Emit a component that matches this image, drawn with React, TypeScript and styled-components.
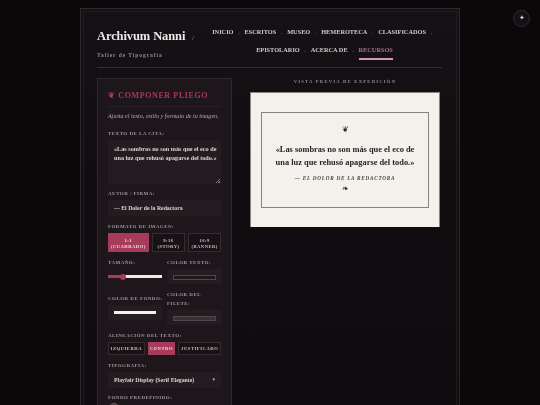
import React from "react";
import styled, { createGlobalStyle } from "styled-components";

const Global = createGlobalStyle`
  html, body { margin: 0; padding: 0; height: 405px; overflow: hidden; background: #0a0708; }
  * { box-sizing: border-box; }
  #root { font-family: "Liberation Serif", serif; }
`;
const Page = styled.div`
  width: 540px; height: 405px; overflow: hidden; padding-top: 8px; filter: blur(0.3px);
  background: #0b0809;
`;
const Frame = styled.div`
  position: relative; width: 380px; margin-left: 80px; height: 420px;
  background: linear-gradient(180deg, #151116 0%, #100c0f 45%, #0f0b0e 100%); border: 1px solid #30262b; padding: 0 17px 0 16px;
  &::before { content: ""; position: absolute; inset: 2px; border: 1px solid #221a1e; pointer-events: none; }
`;
const Header = styled.header`
  display: flex; align-items: flex-start; height: 59px; border-bottom: 1px solid #3a2a30; 
`;
const Brand = styled.div` width: 110px; padding-top: 19px; flex: none; `;
const Title = styled.div`
  font-size: 12.5px; font-weight: 700; color: #efe8e6; line-height: 16px; white-space: nowrap; letter-spacing: -0.1px;
  span { font-size: 7px; color: #a09498; font-weight: 400; margin-left: 7px; }
`;
const Sub = styled.div` font-size: 5.6px; letter-spacing: 0.9px; color: #93868a; margin-top: 6px; font-weight: 700; `;
const Nav = styled.nav`
  flex: 1; display: flex; flex-wrap: wrap; justify-content: center; padding-top: 16px; 
`;
const NavItem = styled.span<{ $active?: boolean }>`
  font-size: 6.3px; letter-spacing: 0; font-weight: 700; white-space: nowrap; height: 17.5px; line-height: 14px;
  color: ${p => (p.$active ? "#b0708a" : "#d3c9c8")};
  & > b { font-weight: 700; border-bottom: ${p => (p.$active ? "2px solid #d79ab5" : "none")}; display: inline-block; height: 17px; }
`;
const Dot = styled.i` color: #a8385a; font-style: normal; font-size: 7px; margin: 0 4.6px; font-weight: 700; `;
const Main = styled.div` display: flex; padding-top: 10px; gap: 18px; `;
const Panel = styled.section`
  width: 135px; flex: none; height: 340px; background: #1d161b; border: 1px solid #33272c; padding: 11px 10px;
`;
const PanelTitle = styled.h2`
  margin: 0; font-size: 8px; letter-spacing: 0.62px; font-weight: 700; color: #a83a5c; line-height: 12px;
  padding-bottom: 4px; border-bottom: 1px solid #2a2026;
`;
const Hint = styled.p` margin: 5px 0 0; font-size: 6.1px; font-style: italic; color: #b5a9ab; line-height: 8px; white-space: nowrap; `;
const Label = styled.div<{ $wrap?: boolean }>`
  font-size: 5px; letter-spacing: 0.46px; font-weight: 700; color: #a0959a; line-height: ${p => (p.$wrap ? "8.5px" : "7px")}; white-space: ${p => (p.$wrap ? "normal" : "nowrap")};
`;
const Field = styled.div<{ $top?: number; $gap?: number }>`
  margin-top: ${p => p.$top ?? 0}px;
  & > ${Label} { margin-bottom: ${p => p.$gap ?? 3}px; }
`;
const TextArea = styled.div`
  position: relative; height: 44px; background: #241c20; padding: 4px 6px; font-size: 6.2px; line-height: 9.3px; font-weight: 700; color: #dcd3d1; white-space: nowrap;
  &::after { content: ""; position: absolute; right: 1px; bottom: 1px; width: 4px; height: 4px; background: linear-gradient(135deg, transparent 50%, #777 50%, #777 60%, transparent 60%, transparent 75%, #777 75%); }
`;
const Input = styled.div`
  height: 16px; background: #241c20; padding: 0 6px; font-size: 5.8px; line-height: 16px; font-weight: 700; color: #dcd3d1; white-space: nowrap;
`;
const Formats = styled.div` display: flex; gap: 3px; `;
const Fmt = styled.div<{ $w: number; $active?: boolean }>`
  width: ${p => p.$w}px; height: 19px; text-align: center; font-size: 4.6px; letter-spacing: 0.5px; line-height: 6px; font-weight: 700; padding-top: 3.5px;
  background: ${p => (p.$active ? "#a83a5c" : "#181216")}; border: 1px solid ${p => (p.$active ? "#a83a5c" : "#3a2a30")};
  color: ${p => (p.$active ? "#f0e0e2" : "#c8bfc0")}; white-space: nowrap;
`;
const Grid = styled.div` display: grid; grid-template-columns: 54px 55px; column-gap: 5px; `;
const Slider = styled.div`
  position: relative; height: 15px; display: flex; align-items: center;
  &::before { content: ""; width: 15px; height: 3px; background: #a83a5c; }
  &::after { content: ""; flex: 1; height: 3px; background: #efe9e8; }
`;
const Thumb = styled.i` position: absolute; left: 12px; top: 4.5px; width: 6px; height: 6px; border-radius: 50%; background: #a83a5c; `;
const Swatch = styled.div<{ $c: string; $light?: boolean }>`
  height: 15px; background: #241c20; padding: 6px;
  &::after { content: ""; display: block; height: 3px; background: ${p => p.$c}; border: ${p => (p.$light ? "none" : "1px solid #4e4a4b")}; }
`;
const Aligns = styled.div` display: flex; gap: 3px; `;
const Align = styled.div<{ $w: number; $active?: boolean }>`
  width: ${p => p.$w}px; height: 13px; text-align: center; line-height: 11px; font-size: 4.6px; letter-spacing: 0.55px; font-weight: 700;
  background: ${p => (p.$active ? "#a83a5c" : "#181216")}; border: 1px solid ${p => (p.$active ? "#a83a5c" : "#3a2a30")};
  color: ${p => (p.$active ? "#f0e0e2" : "#c8bfc0")}; white-space: nowrap;
`;
const Select = styled(Input)` display: flex; justify-content: space-between; padding-right: 5px; span:last-child { font-size: 4.5px; color: #bbb; } `;
const Circle = styled.div` width: 12px; height: 12px; border-radius: 50%; background: #4a3a40; border: 1px solid #6a5a60; margin-top: -1px; `;
const Preview = styled.section` width: 190px; flex: none; `;
const PreviewLabel = styled.div` text-align: center; font-size: 4.7px; letter-spacing: 1.2px; font-weight: 700; color: #95898d; line-height: 6px; margin-top: 1px; `;
const Card = styled.div`
  margin-top: 7px; height: 135px; background: #f4f0ec; padding: 19px 11px 20px; border: 1px solid #8a8382; border-bottom: 0;
`;
const Inner = styled.div`
  height: 96px; border: 1px solid #888381; text-align: center; padding-top: 13px; color: #2a2426; margin: 0 -1px;
`;
const Orn = styled.div` font-size: 8px; line-height: 8px; color: #222; `;
const Quote = styled.div` font-size: 8.4px; font-weight: 700; line-height: 12.5px; margin-top: 10px; white-space: nowrap; `;
const Sign = styled.div` font-size: 5.2px; font-style: italic; letter-spacing: 0.75px; margin: 6px 0 3px; line-height: 7px; font-weight: 700; color: #4a4346; white-space: nowrap; `;
const Fab = styled.div`
  position: fixed; top: 10px; left: 513px; width: 17px; height: 17px; border-radius: 50%; background: #151015; border: 1px solid #33292e;
  color: #e8c0d0; font-size: 7px; line-height: 15px; text-align: center;
`;

const nav1 = ["INICIO", "ESCRITOS", "MUSEO", "HEMEROTECA", "CLASIFICADOS"];
const nav2 = ["EPISTOLARIO", "ACERCA DE"];

export default function App() {
  return (
    <Page>
      <Global />
      <Frame>
        <Header>
          <Brand>
            <Title>Archivum Nanni<span>/</span></Title>
            <Sub>Taller de Tipografía</Sub>
          </Brand>
          <Nav>
            {nav1.map(n => <NavItem key={n}><b>{n}</b><Dot>.</Dot></NavItem>)}
            {nav2.map(n => <NavItem key={n}><b>{n}</b><Dot>.</Dot></NavItem>)}
            <NavItem $active><b>RECURSOS</b></NavItem>
          </Nav>
        </Header>
        <Main>
          <Panel>
            <PanelTitle>❦ COMPONER PLIEGO</PanelTitle>
            <Hint>Ajusta el texto, estilo y formato de tu imagen.</Hint>
            <Field $top={10}>
              <Label>TEXTO DE LA CITA:</Label>
              <TextArea>«Las sombras no son más que el eco de<br />una luz que rehusó apagarse del todo.»</TextArea>
            </Field>
            <Field $top={6}>
              <Label>AUTOR / FIRMA:</Label>
              <Input>— El Dolor de la Redactora</Input>
            </Field>
            <Field $top={7}>
              <Label>FORMATO DE IMAGEN:</Label>
              <Formats>
                <Fmt $w={41} $active>1:1<br />(CUADRADO)</Fmt>
                <Fmt $w={34}>9:16<br />(STORY)</Fmt>
                <Fmt $w={33}>16:9<br />(BANNER)</Fmt>
              </Formats>
            </Field>
            <Grid>
              <Field $top={7}>
                <Label>TAMAÑO:</Label>
                <Slider><Thumb /></Slider>
              </Field>
              <Field $top={7}>
                <Label>COLOR TEXTO:</Label>
                <Swatch $c="#1a1a1a" />
              </Field>
              <Field $top={7}>
                <Label style={{ marginTop: 4 }}>COLOR DE FONDO:</Label>
                <Swatch $c="#f4f0ec" $light />
              </Field>
              <Field $top={7} $gap={2}>
                <Label $wrap>COLOR DEL FILETE:</Label>
                <Swatch $c="#333" />
              </Field>
            </Grid>
            <Field $top={7}>
              <Label>ALINEACIÓN DEL TEXTO:</Label>
              <Aligns>
                <Align $w={37}>IZQUIERDA</Align>
                <Align $w={28} $active>CENTRO</Align>
                <Align $w={43}>JUSTIFICADO</Align>
              </Aligns>
            </Field>
            <Field $top={7}>
              <Label>TIPOGRAFÍA:</Label>
              <Select><span>Playfair Display (Serif Elegante)</span><span>▼</span></Select>
            </Field>
            <Field $top={6}>
              <Label>FONDO PREDEFINIDO:</Label>
              <Circle />
            </Field>
          </Panel>
          <Preview>
            <PreviewLabel>VISTA PREVIA DE EXPEDICIÓN</PreviewLabel>
            <Card>
              <Inner>
                <Orn>❦</Orn>
                <Quote>«Las sombras no son más que el eco de<br />una luz que rehusó apagarse del todo.»</Quote>
                <Sign>— EL DOLOR DE LA REDACTORA</Sign>
                <Orn>❧</Orn>
              </Inner>
            </Card>
          </Preview>
        </Main>
      </Frame>
      <Fab>✦</Fab>
    </Page>
  );
}
